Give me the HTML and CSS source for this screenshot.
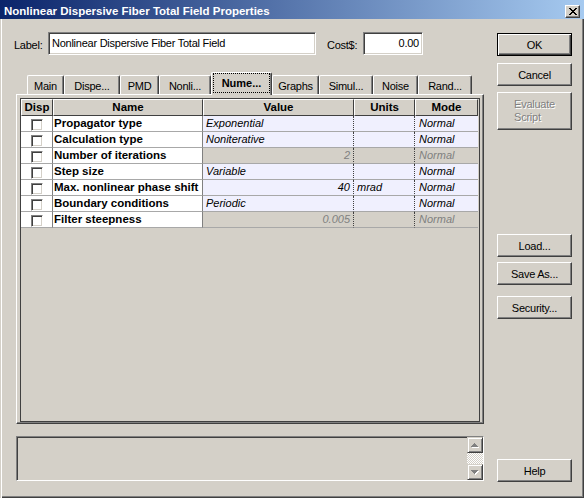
FILE: index.html
```html
<!DOCTYPE html>
<html>
<head>
<meta charset="utf-8">
<title>Nonlinear Dispersive Fiber Total Field Properties</title>
<link rel="stylesheet" href="styles.css">
</head>
<body>
<div class="window">
  <div class="titlebar">
    <span class="title">Nonlinear Dispersive Fiber Total Field Properties</span>
    <span class="close"><svg width="8" height="7" viewBox="0 0 8 7"><path d="M0 0h2v1h1v1h2V1h1V0h2v1H7v1H6v1H5v1h1v1h1v1h1v1H6V6H5V5H3v1H2v1H0V6h1V5h1V4h1V3H2V2H1V1H0z" fill="#000"/></svg></span>
  </div>
  <div class="client">
    <div class="main">
      <div class="labelrow">
        <span class="lbl lbl-label">Label:</span>
        <div class="field field-label">Nonlinear Dispersive Fiber Total Field</div>
        <span class="lbl lbl-cost">Cost$:</span>
        <div class="field field-cost">0.00</div>
      </div>
      <div class="tabs">
        <div class="tab tw-main">Main</div>
        <div class="tab tw-disp">Dispe...</div>
        <div class="tab tw-pmd">PMD</div>
        <div class="tab tw-nonli">Nonli...</div>
        <div class="tab tab-sel tw-nume"><span class="focus">Nume...</span></div>
        <div class="tab tw-graphs">Graphs</div>
        <div class="tab tw-simul">Simul...</div>
        <div class="tab tw-noise">Noise</div>
        <div class="tab tw-rand">Rand...</div>
      </div>
      <div class="panel">
        <div class="grid">
          <div class="table">
            <div class="th">Disp</div>
            <div class="th">Name</div>
            <div class="th">Value</div>
            <div class="th">Units</div>
            <div class="th">Mode</div>

            <div class="td c-disp"><div class="cb"></div></div>
            <div class="td c-name">Propagator type</div>
            <div class="td c-val lav">Exponential</div>
            <div class="td c-unit lav"></div>
            <div class="td c-mode lav">Normal</div>

            <div class="td c-disp"><div class="cb"></div></div>
            <div class="td c-name">Calculation type</div>
            <div class="td c-val lav">Noniterative</div>
            <div class="td c-unit lav"></div>
            <div class="td c-mode lav">Normal</div>

            <div class="td c-disp"><div class="cb"></div></div>
            <div class="td c-name">Number of iterations</div>
            <div class="td c-val num dis">2</div>
            <div class="td c-unit dis"></div>
            <div class="td c-mode dis">Normal</div>

            <div class="td c-disp"><div class="cb"></div></div>
            <div class="td c-name">Step size</div>
            <div class="td c-val lav">Variable</div>
            <div class="td c-unit lav"></div>
            <div class="td c-mode lav">Normal</div>

            <div class="td c-disp"><div class="cb"></div></div>
            <div class="td c-name">Max. nonlinear phase shift</div>
            <div class="td c-val num lav">40</div>
            <div class="td c-unit lav">mrad</div>
            <div class="td c-mode lav">Normal</div>

            <div class="td c-disp"><div class="cb"></div></div>
            <div class="td c-name">Boundary conditions</div>
            <div class="td c-val lav">Periodic</div>
            <div class="td c-unit lav"></div>
            <div class="td c-mode lav">Normal</div>

            <div class="td c-disp"><div class="cb"></div></div>
            <div class="td c-name">Filter steepness</div>
            <div class="td c-val num dis">0.005</div>
            <div class="td c-unit dis"></div>
            <div class="td c-mode dis">Normal</div>
          </div>
        </div>
      </div>
      <div class="msg">
        <div class="scroll">
          <div class="sbtn"><svg width="8" height="5" viewBox="0 0 8 5"><path d="M4 1h1v1h1v1h1v1h1v1H1V4h1V3h1V2h1z" fill="#fff"/><path d="M3 0h1v1h1v1h1v1h1v1H0V3h1V2h1V1h1z" fill="#808080"/></svg></div>
          <div class="track"></div>
          <div class="sbtn"><svg width="8" height="5" viewBox="0 0 8 5"><path d="M1 1h7v1H7v1H6v1H5v1H4V4H3V3H2V2H1z" fill="#fff"/><path d="M0 0h7v1H6v1H5v1H4v1H3V3H2V2H1V1H0z" fill="#808080"/></svg></div>
        </div>
      </div>
    </div>
    <div class="side">
      <div class="btn btn-default">OK</div>
      <div class="btn m-cancel">Cancel</div>
      <div class="btn btn-disabled m-eval"><div class="btext">Evaluate<br>Script</div></div>
      <div class="btn m-load">Load...</div>
      <div class="btn m-save">Save As...</div>
      <div class="btn m-sec">Security...</div>
      <div class="btn m-help">Help</div>
    </div>
  </div>
</div>
</body>
</html>
```

FILE: styles.css
```css
* { box-sizing: border-box; }
html, body { margin: 0; padding: 0; }
body {
  width: 584px;
  height: 498px;
  overflow: hidden;
  background: #d4d0c8;
  font-family: "Liberation Sans", Arial, sans-serif;
  font-size: 11px;
  color: #000;
}
.window {
  width: 584px;
  height: 498px;
  background: #d4d0c8;
  box-shadow: inset 1px 0 0 #d4d0c8, inset 2px 0 0 #fff, inset -1px -1px 0 #404040, inset -2px -2px 0 #808080;
}
.titlebar {
  height: 19px;
  display: flex;
  align-items: flex-start;
  background: linear-gradient(to right, #0a246a 0%, #a6caf0 100%);
  color: #fff;
}
.title {
  flex: 1;
  font-weight: bold;
  font-size: 11.5px;
  line-height: 15px;
  padding: 4px 0 0 4px;
  white-space: nowrap;
}
.close {
  width: 15px;
  height: 13px;
  margin: 5px 4px 0 0;
  background: #d4d0c8;
  border-top: 1px solid #fff;
  border-left: 1px solid #fff;
  border-right: 1px solid #404040;
  border-bottom: 1px solid #404040;
  box-shadow: inset -1px -1px 0 #808080;
  display: flex;
  align-items: center;
  justify-content: center;
}
.close svg { display: block; margin-top: -1px; }

.client {
  display: flex;
  padding: 13px 0 0 14px;
}
.main {
  width: 470px;
  display: flex;
  flex-direction: column;
}
.side {
  width: 75px;
  margin-left: 13px;
  padding-top: 1px;
  display: flex;
  flex-direction: column;
}

.labelrow {
  display: flex;
  align-items: center;
  height: 23px;
}
.lbl { letter-spacing: -0.25px; white-space: nowrap; padding-top: 2px; }
.lbl-label { width: 34px; }
.lbl-cost { width: 36px; margin-left: 11px; }
.field {
  height: 23px;
  background: #fff;
  border-top: 1px solid #808080;
  border-left: 1px solid #808080;
  border-right: 1px solid #fff;
  border-bottom: 1px solid #fff;
  box-shadow: inset 1px 1px 0 #404040, inset -1px -1px 0 #d4d0c8;
  line-height: 20px;
  padding: 0 3px;
  letter-spacing: -0.25px;
  white-space: nowrap;
}
.field-label { width: 268px; }
.field-cost { width: 60px; text-align: right; }

.tabs {
  display: flex;
  align-items: flex-end;
  height: 22px;
  margin: 17px 0 0 13px;
  position: relative;
  z-index: 1;
}
.tab {
  height: 19px;
  background: #d4d0c8;
  border-top: 1px solid #fff;
  border-left: 1px solid #fff;
  border-right: 1px solid #404040;
  box-shadow: inset -1px 0 0 #808080;
  border-radius: 2px 2px 0 0;
  display: flex;
  align-items: center;
  justify-content: center;
  padding-top: 1px;
  letter-spacing: -0.25px;
  white-space: nowrap;
}
.tab-sel {
  height: 23px;
  margin-bottom: -1px;
  padding: 0 1px 2px 1px;
  align-items: stretch;
  font-weight: bold;
  letter-spacing: 0;
}
.focus {
  flex: 1;
  border: 1px dotted #000;
  display: flex;
  align-items: center;
  justify-content: center;
}
.tw-main { width: 37px; }
.tw-disp { width: 56px; }
.tw-pmd { width: 39px; }
.tw-nonli { width: 52px; }
.tw-nume { width: 61px; }
.tw-graphs { width: 47px; }
.tw-simul { width: 54px; }
.tw-noise { width: 45px; }
.tw-rand { width: 54px; }

.panel {
  margin-left: 2px;
  width: 468px;
  height: 330px;
  border-top: 1px solid #fff;
  border-left: 1px solid #fff;
  border-right: 1px solid #404040;
  border-bottom: 1px solid #404040;
  box-shadow: inset -1px -1px 0 #808080;
  padding: 3px 3px 1px 3px;
  display: flex;
}
.grid {
  flex: 1;
  border: 1px solid #404040;
  background: #d4d0c8;
}
.table {
  display: grid;
  grid-template-columns: 32px 150px 151px 61px 63px;
  grid-template-rows: 17px repeat(7, 16px);
}
.th {
  border-top: 1px solid #fff;
  border-left: 1px solid #fff;
  border-right: 1px solid #404040;
  border-bottom: 1px solid #404040;
  font-weight: bold;
  font-size: 11.5px;
  line-height: 14px;
  text-align: center;
  white-space: nowrap;
}
.td {
  border-bottom: 1px solid #a8a8a8;
  line-height: 15px;
  white-space: nowrap;
  overflow: hidden;
}
.c-disp {
  background: #fff;
  border-right: 1px solid #808080;
  padding: 3px 0 0 10px;
}
.c-name {
  background: #fff;
  border-right: 1px solid #808080;
  padding-left: 1px;
  font-weight: bold;
  font-size: 11.5px;
}
.c-val {
  font-style: italic;
  padding: 0 3px 0 3px;
  border-right: 1px dotted #404040;
}
.c-unit {
  font-style: italic;
  padding-left: 3px;
  border-right: 1px dotted #404040;
}
.c-mode {
  font-style: italic;
  padding-left: 4px;
}
.num { text-align: right; }
.lav { background: #f0f0fe; }
.dis { background: #d4d0c8; color: #808080; }
.cb {
  width: 12px;
  height: 12px;
  background: #fff;
  border-top: 1px solid #808080;
  border-left: 1px solid #808080;
  border-right: 1px solid #fff;
  border-bottom: 1px solid #fff;
  box-shadow: inset 1px 1px 0 #404040, inset -1px -1px 0 #d4d0c8;
}

.msg {
  margin: 12px 0 0 2px;
  width: 468px;
  height: 45px;
  border-top: 1px solid #808080;
  border-left: 1px solid #808080;
  border-right: 1px solid #fff;
  border-bottom: 1px solid #fff;
  box-shadow: inset 1px 1px 0 #404040, inset -1px -1px 0 #d4d0c8;
  background: #d4d0c8;
  display: flex;
  justify-content: flex-end;
}
.scroll {
  width: 16px;
  display: flex;
  flex-direction: column;
}
.sbtn {
  height: 16px;
  background: #d4d0c8;
  border-top: 1px solid #d4d0c8;
  border-left: 1px solid #d4d0c8;
  border-right: 1px solid #404040;
  border-bottom: 1px solid #404040;
  box-shadow: inset 1px 1px 0 #fff, inset -1px -1px 0 #808080;
  display: flex;
  align-items: center;
  justify-content: center;
}
.sbtn svg { display: block; }
.track {
  flex: 1;
  background: repeating-conic-gradient(#fff 0 25%, #d4d0c8 0 50%) 0 0 / 2px 2px;
}

.btn {
  width: 75px;
  height: 23px;
  background: #d4d0c8;
  border-top: 1px solid #fff;
  border-left: 1px solid #fff;
  border-right: 1px solid #404040;
  border-bottom: 1px solid #404040;
  box-shadow: inset -1px -1px 0 #808080;
  display: flex;
  align-items: center;
  justify-content: center;
  letter-spacing: -0.25px;
  white-space: nowrap;
}
.btn-default {
  border: 1px solid #000;
  box-shadow: inset 1px 1px 0 #fff, inset -1px -1px 0 #404040, inset -2px -2px 0 #808080;
}
.btn-disabled {
  height: 38px;
  color: #808080;
  text-shadow: 1px 1px 0 #fff;
}
.btext { text-align: left; line-height: 13px; }
.m-cancel { margin-top: 7px; }
.m-eval { margin-top: 6px; }
.m-load { margin-top: 104px; }
.m-save { margin-top: 5px; }
.m-sec { margin-top: 11px; }
.m-help { margin-top: 140px; }
```
